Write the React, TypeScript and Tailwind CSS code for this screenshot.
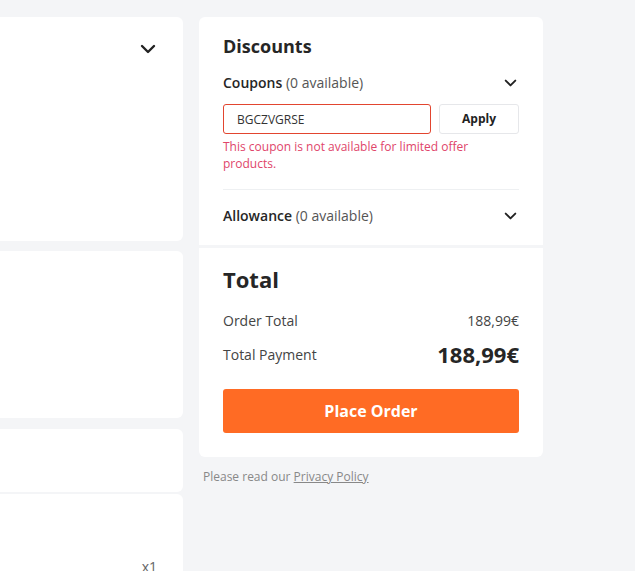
const font = { fontFamily: '"Open Sans", "Liberation Sans", sans-serif' };

function Chevron({ big = false }: { big?: boolean }) {
  return (
    <svg
      viewBox="0 0 16 10"
      className={big ? "w-[16px] h-[10px]" : "w-[13px] h-[8px]"}
      fill="none"
      stroke="#222"
      strokeWidth={2.4}
      strokeLinecap="round"
      strokeLinejoin="round"
    >
      <path d="M2 2l6 6 6-6" />
    </svg>
  );
}

export default function App() {
  return (
    <div className="h-[571px] overflow-hidden bg-[#f4f5f7] text-[#262626]" style={font}>
      <div className="flex gap-4 pt-[17px]">
        {/* left column, cut off by the window */}
        <div className="w-[183px] flex flex-col">
          <div className="h-[224px] bg-white rounded-r-md flex justify-end pr-[27px] pt-[27px]">
            <Chevron big />
          </div>
          <div className="h-[167px] mt-[10px] bg-white rounded-r-md" />
          <div className="h-[63px] mt-[11px] bg-white rounded-r-md" />
          <div className="h-[90px] mt-[2px] bg-white rounded-tr-md flex items-end justify-end pr-[26px] pb-[7px]">
            <span className="text-[14px] leading-[20px] text-[#666]">x1</span>
          </div>
        </div>

        {/* right column */}
        <div className="w-[344px] flex flex-col">
          <div className="bg-white rounded-t-md px-6 pt-[15px] pb-[19px]">
            <h2 className="text-[18px] leading-[28px] font-bold">Discounts</h2>
            <div className="mt-[13px] flex items-center justify-between h-5">
              <span className="text-[14px] leading-[20px]">
                <span className="font-semibold">Coupons</span>{" "}
                <span className="text-[#555]">(0 available)</span>
              </span>
              <span className="pr-[2px]"><Chevron /></span>
            </div>
            <div className="mt-[11px] flex gap-2">
              <input
                readOnly
                value="BGCZVGRSE"
                className="w-[208px] h-[30px] border border-[#e2452f] rounded-[3px] px-[13px] text-[12px] text-[#333] outline-none"
                style={font}
              />
              <button className="w-[80px] h-[30px] border border-[#e6e7ea] rounded-[3px] text-[12px] font-bold text-[#222]">
                Apply
              </button>
            </div>
            <p className="mt-1 text-[12px] leading-[17px] text-[#e0456a] pr-10">
              This coupon is not available for limited offer products.
            </p>
            <div className="mt-[17px] h-px bg-[#eef0f2]" />
            <div className="mt-[16px] flex items-center justify-between h-5">
              <span className="text-[14px] leading-[20px]">
                <span className="font-semibold">Allowance</span>{" "}
                <span className="text-[#555]">(0 available)</span>
              </span>
              <span className="pr-[2px]"><Chevron /></span>
            </div>
          </div>

          <div className="mt-[3px] bg-white rounded-b-md px-6 pt-4 pb-6">
            <h2 className="text-[22px] leading-[30px] font-bold">Total</h2>
            <div className="mt-4 flex items-center justify-between h-5 text-[14px] text-[#444]">
              <span>Order Total</span>
              <span>188,99€</span>
            </div>
            <div className="mt-[9px] flex items-center justify-between h-[30px]">
              <span className="text-[14px] text-[#444]">Total Payment</span>
              <span className="text-[22px] font-bold">188,99€</span>
            </div>
            <button className="mt-5 w-full h-[44px] rounded-[3px] bg-[#ff6b24] text-white text-[16px] font-bold">
              Place Order
            </button>
          </div>

          <p className="mt-3 pl-1 text-[12px] leading-[16px] text-[#888]">
            Please read our <span className="underline">Privacy Policy</span>
          </p>
        </div>
      </div>
    </div>
  );
}
